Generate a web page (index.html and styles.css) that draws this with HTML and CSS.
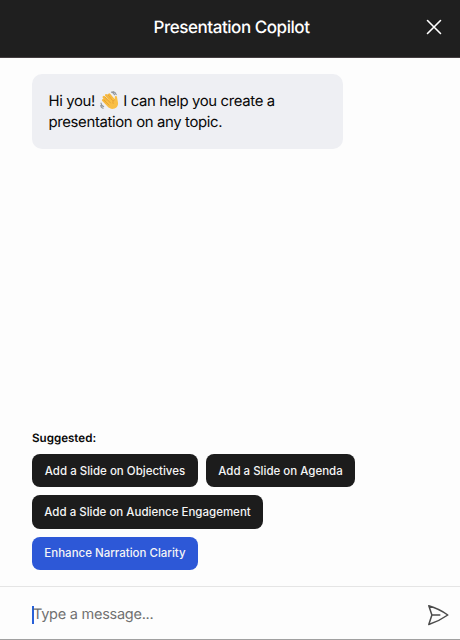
FILE: index.html
```html
<!DOCTYPE html>
<html lang="en">
<head>
<meta charset="utf-8">
<title>Presentation Copilot</title>
<link rel="stylesheet" href="styles.css">
</head>
<body>
<div class="panel">
  <header class="header">
    <h1 class="title">Presentation Copilot</h1>
    <button class="close" aria-label="Close">
      <svg width="16" height="16" viewBox="0 0 16 16"><path d="M1.5 1.5l13 13M14.5 1.5l-13 13" fill="none" stroke="#fff" stroke-width="1.6" stroke-linecap="round"/></svg>
    </button>
  </header>
  <main class="chat">
    <div class="bubble">
      <p class="line">Hi you! <svg class="wave" width="19" height="19" viewBox="0 0 19 19" aria-hidden="true">
        <g fill="none" stroke="#92979c" stroke-width="1.2" stroke-linecap="round"><path d="M11.5 1.2q2.3.4 3 2.6M13 .6q2.6.5 3.2 3M1 12q.1 2.6 2.6 3.6M.7 14.6q.4 2 2.3 2.7"/></g>
        <path d="M6.2 4.2l6 7M3.8 6.2l6.5 7M3.2 9.1l6 6.2M9.2 3.6l5 6" stroke="#f6b83c" stroke-width="2.5" stroke-linecap="round"/>
        <path d="M5.2 11L12 6.4l2.6 2.2.2-2.5c.1-1.5 2-1.4 2.2 0l1 5.6c.4 3-1.5 5.5-4.4 6.1-2.5.5-4.2-.7-5.4-2z" fill="#f9bf45"/>
        <path d="M7.7 3.7l4.9 5.8M5 6l5.5 6M4.2 9.3l4.8 4.8" stroke="#d98d24" stroke-width=".6" stroke-linecap="round"/>
        <path d="M14.6 8.8c-1.7.8-2 2.4-1.4 4" fill="none" stroke="#dc9229" stroke-width=".7"/>
      </svg> I can help you create a</p>
      <p class="line">presentation on any topic.</p>
    </div>
  </main>
  <section class="suggestions">
    <h2 class="label">Suggested:</h2>
    <div class="chips">
      <button class="chip">Add a Slide on Objectives</button>
      <button class="chip agenda">Add a Slide on Agenda</button>
      <button class="chip audience">Add a Slide on Audience Engagement</button>
      <button class="chip active">Enhance Narration Clarity</button>
    </div>
  </section>
  <footer class="composer">
    <div class="field"><span class="caret"></span><span class="placeholder">Type a message...</span></div>
    <svg class="send" width="22" height="22" viewBox="0 0 22 22"><path d="M1.8 1.8Q12 4.8 20.8 11Q12 17.2 1.8 20.5L4.9 11zM4.9 11H12.8" fill="none" stroke="#4b4b4b" stroke-width="1.5" stroke-linejoin="round" stroke-linecap="round"/></svg>
  </footer>
</div>
</body>
</html>
```
FILE: styles.css
```css
* { box-sizing: border-box; }
body { margin: 0; font-family: Inter, "Liberation Sans", sans-serif; background: #fdfdfd; color: #080808; text-rendering: geometricPrecision; }
h1, h2, p { margin: 0; }
button { border: 0; padding: 0; font: inherit; background: none; }
.panel { width: 460px; height: 640px; display: flex; flex-direction: column; overflow: hidden; border-bottom: 1px solid #a0a0a0; }
.header { height: 58px; flex: none; display: grid; grid-template-columns: 1fr auto 1fr; align-items: center; background: #1f1f1f; border-bottom: 1px solid #443e40; padding: 0 18px 3px 21px; color: #fff; }
.title { grid-column: 2; font-size: 17px; font-weight: 500; line-height: 24px; letter-spacing: -.45px; white-space: nowrap; padding-top: 1px; }
.close { justify-self: end; display: flex; }
.chat { flex: 1; padding: 16px 32px; }
.bubble { width: 311px; height: 75px; border-radius: 10px; background: #eeeff3; padding: 17px 16.5px; }
.line { font-size: 14.9px; line-height: 21px; letter-spacing: -.35px; white-space: nowrap; }
.wave { vertical-align: -4px; margin: 0 .8px; }
.suggestions { padding: 0 32px 16px; }
.label { font-size: 11.6px; line-height: 16px; font-weight: 600; margin-bottom: 8px; }
.chips { display: flex; flex-wrap: wrap; gap: 8px; }
.chip { height: 33.4px; width: 166px; border-radius: 8px; background: #1c1c1c; color: #f5f5f5; font-size: 11.5px; font-weight: 500; white-space: nowrap; text-align: center; }
.agenda { width: 149px; }
.audience { width: 231px; }
.active { background: #2d58d7; }
.composer { height: 53px; flex: none; display: flex; align-items: center; justify-content: space-between; border-top: 1px solid #e5e5e5; padding: 4px 11px 0 32px; }
.field { display: flex; align-items: center; }
.caret { width: 2px; height: 18px; background: #2860d8; margin-right: -1px; }
.placeholder { font-size: 14.5px; line-height: 20px; letter-spacing: -.25px; color: #707070; white-space: nowrap; }
```
